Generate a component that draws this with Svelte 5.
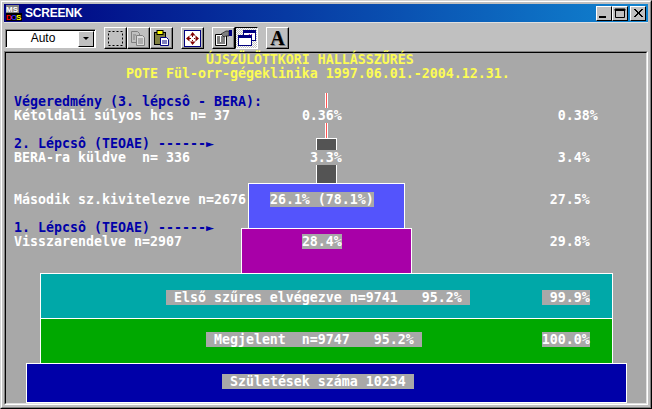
<script>
	// The DOS screen is an 80x25 text grid (8x14 cells), so rows are built by column.
	function row(...parts) {
		let used = 0;
		const segs = [];
		for (const [col, text, cls] of parts) {
			if (col > used) segs.push({ text: ' '.repeat(col - used), cls: '' });
			segs.push({ text, cls });
			used = col + text.length;
		}
		return segs;
	}

	const rows = [
		row([25, 'ÚJSZÜLÖTTKORI HALLÁSSZŰRÉS', 'yellow']),
		row([15, 'POTE Fül-orr-gégeklinika 1997.06.01.-2004.12.31.', 'yellow']),
		[],
		row([1, 'Végeredmény (3. lépcsô - BERA):', 'navy']),
		row([1, 'Kétoldali súlyos hcs  n= 37', ''], [37, '0.36%', 'chip'], [69, '0.38%', '']),
		[],
		row([1, '2. Lépcsô (TEOAE) ------►', 'navy']),
		row([1, 'BERA-ra küldve  n= 336', ''], [38, '3.3%', 'chip'], [69, '3.4%', '']),
		[],
		[],
		row([1, 'Második sz.kivitelezve n=2676', ''], [33, '26.1% (78.1%)', 'chip'], [68, '27.5%', '']),
		[],
		row([1, '1. Lépcsô (TEOAE) ------►', 'navy']),
		row([1, 'Visszarendelve n=2907', ''], [37, '28.4%', 'chip'], [68, '29.8%', '']),
		[],
		[],
		[],
		row([20, ' Első szűres elvégezve n=9741   95.2% ', 'chip'], [67, ' 99.9%', 'chip']),
		[],
		[],
		row([25, ' Megjelent  n=9747   95.2% ', 'chip'], [67, '100.0%', 'chip']),
		[],
		[],
		row([27, ' Születések száma 10234 ', 'chip'])
	];

	const bars = [
		{ id: 'red', width: 3, height: 45 },
		{ id: 'dark', width: 21, height: 45 },
		{ id: 'blue', width: 157, height: 45 },
		{ id: 'purple', width: 171, height: 45 },
		{ id: 'teal', width: 573, height: 45 },
		{ id: 'green', width: 573, height: 45 },
		{ id: 'deep', width: 601, height: 40 }
	];
</script>

<div class="window">
	<div class="frame">
		<header class="titlebar">
			<svg class="dos-logo" width="16" height="16" viewBox="0 0 16 16" aria-hidden="true">
				<rect x="0" y="0" width="13" height="8" fill="#808080" />
				<rect x="0" y="8" width="16" height="8" fill="#000" />
				<text x="0" y="7" class="ms">MS</text>
				<text x="0" y="15" class="d">D</text>
				<text x="5" y="15" class="o">O</text>
				<text x="10" y="15" class="s">S</text>
			</svg>
			<span class="title">SCREENK</span>
			<div class="caption-buttons">
				<button class="cap" aria-label="Minimize">
					<svg width="14" height="13" viewBox="0 0 14 13"><rect x="2" y="9" width="7" height="2" fill="#000" /></svg>
				</button>
				<button class="cap" aria-label="Maximize">
					<svg width="14" height="13" viewBox="0 0 14 13"><path d="M2.5 2.5h9v8h-9z M2 2h10v1.5H2z" fill="none" stroke="#000" /></svg>
				</button>
				<button class="cap close" aria-label="Close">
					<svg width="14" height="13" viewBox="0 0 14 13"><path d="M3 2l8 8M4 2l8 8M11 2l-8 8M12 2l-8 8" stroke="#000" stroke-width="1" /></svg>
				</button>
			</div>
		</header>

		<div class="toolbar">
			<div class="combo">
				<span class="combo-value">Auto</span>
				<span class="combo-arrow"><i></i></span>
			</div>

			<div class="tool-group">
				<button class="tool" aria-label="Mark">
					<svg width="17" height="17" viewBox="0 0 17 17"><rect x="1.5" y="1.5" width="14" height="14" fill="none" stroke="#000" stroke-dasharray="2 2" /></svg>
				</button>
				<button class="tool" aria-label="Copy">
					<svg width="17" height="17" viewBox="0 0 17 17">
						<path d="M1.5 1.5h6l2 2v9h-8z" fill="#c0c0c0" stroke="#808080" />
						<path d="M6.5 5.5h6l2 2v8h-8z" fill="#dcdcdc" stroke="#808080" />
						<path d="M8 9h5M8 11h5M8 13h5M3 5h3M3 7h2M3 9h2" stroke="#808080" />
					</svg>
				</button>
				<button class="tool" aria-label="Paste">
					<svg width="17" height="17" viewBox="0 0 17 17">
						<rect x="1.5" y="2.5" width="11" height="12" fill="#808040" stroke="#000" />
						<rect x="4" y="0.5" width="6" height="4" fill="#ffff00" stroke="#000" />
						<path d="M7.5 7.5h6l2 2v6h-8z" fill="#fff" stroke="#000080" />
						<path d="M9 11h5M9 13h5" stroke="#000080" />
					</svg>
				</button>
			</div>

			<div class="tool-group">
				<button class="tool" aria-label="Full screen">
					<svg width="17" height="17" viewBox="0 0 17 17">
						<rect x="0.5" y="0.5" width="16" height="16" fill="#fff" stroke="#000080" />
						<path d="M8.5 2l3 3.5H6z M8 5h1v2H8z M8.5 15l3-3.5H6z M8 10h1v2H8z M2 8.5l3.5-3v6z M5 8h2v1H5z M15 8.5l-3.5-3v6z M10 8h2v1h-2z" fill="#800000" />
					</svg>
				</button>
			</div>

			<div class="tool-group">
				<button class="tool" aria-label="Properties">
					<svg width="19" height="17" viewBox="0 0 19 17">
						<path d="M1.5 4.5h10l1 1v10h-11z" fill="#fff" stroke="#000" />
						<path d="M3 7h3M7 7h4M3 9h3M7 9h4M3 11h3M7 11h4M3 13h8" stroke="#000" />
						<path d="M7 4l5-3h3v5h-3l-2 1z" fill="#808080" stroke="#000" stroke-width="0.6" />
						<rect x="15" y="0" width="3" height="6" fill="#000080" />
					</svg>
				</button>
				<button class="tool pressed" aria-label="Background">
					<svg width="18" height="16" viewBox="0 0 18 16">
						<rect x="5.5" y="0.5" width="12" height="10" fill="#fff" stroke="#000080" />
						<rect x="5" y="0" width="13" height="3" fill="#000080" />
						<path d="M11 4l1.5 2L14 4" fill="none" stroke="#a000a0" />
						<rect x="0.5" y="5.5" width="13" height="10" fill="#fff" stroke="#000080" />
						<rect x="0" y="5" width="14" height="3" fill="#000080" />
					</svg>
				</button>
			</div>

			<div class="tool-group">
				<button class="tool font-tool" aria-label="Font">A</button>
			</div>
		</div>

		<div class="client">
			<main class="screen">
				<div class="pyramid">
					{#each bars as bar (bar.id)}
						<div class="bar {bar.id}" style="width:{bar.width}px; height:{bar.height}px"></div>
					{/each}
				</div>
				<div class="text">
					{#each rows as segs}
						<div class="line">{#each segs as s}<span class={s.cls}>{s.text}</span>{/each}</div>
					{/each}
				</div>
			</main>
		</div>
	</div>
</div>

<style>
	:global(body) {
		margin: 0;
		background: #c0c0c0;
	}

	button {
		padding: 0;
		margin: 0;
		font: inherit;
	}

	.window {
		box-sizing: border-box;
		width: 652px;
		height: 409px;
		border: 1px solid;
		border-color: #d4d4d4 #000 #000 #d4d4d4;
		overflow: hidden;
	}

	.frame {
		box-sizing: border-box;
		height: 100%;
		padding: 2px;
		background: #c0c0c0;
		border: 1px solid;
		border-color: #fff #808080 #808080 #fff;
	}

	.titlebar {
		display: flex;
		align-items: center;
		height: 18px;
		padding: 0 2px;
		background: linear-gradient(90deg, #000080, #1084d0);
	}

	.dos-logo {
		flex: none;
	}

	.dos-logo text {
		font-family: 'Liberation Sans', sans-serif;
		font-weight: 700;
		font-size: 8px;
	}

	.ms {
		fill: #fff;
	}

	.d {
		fill: #f00;
	}

	.o {
		fill: #3030ff;
	}

	.s {
		fill: #ff0;
	}

	.title {
		margin-left: 3px;
		color: #fff;
		font-family: 'Liberation Sans', sans-serif;
		font-weight: 700;
		font-size: 12px;
		letter-spacing: -0.2px;
	}

	.caption-buttons {
		display: flex;
		margin-left: auto;
	}

	.cap {
		display: flex;
		align-items: center;
		justify-content: center;
		box-sizing: border-box;
		width: 16px;
		height: 15px;
		background: #c0c0c0;
		border: 1px solid;
		border-color: #fff #000 #000 #fff;
	}

	.close {
		margin-left: 2px;
	}

	.toolbar {
		display: flex;
		align-items: center;
		box-sizing: border-box;
		height: 29px;
		padding: 2px 0 0 1px;
		border-top: 1px solid #e0e0e0;
	}

	.combo {
		display: flex;
		box-sizing: border-box;
		width: 91px;
		height: 19px;
		border: 1px solid;
		border-color: #808080 #fff #fff #808080;
		box-shadow: inset 1px 1px 0 #000;
		background: #fff;
	}

	.combo-value {
		flex: 1;
		padding: 1px 0 0 2px;
		text-align: center;
		font-family: 'Liberation Sans', sans-serif;
		font-size: 12px;
		line-height: 15px;
	}

	.combo-arrow {
		display: flex;
		align-items: center;
		justify-content: center;
		box-sizing: border-box;
		width: 16px;
		margin: 1px 1px 0 0;
		background: #c0c0c0;
		border: 1px solid;
		border-color: #fff #000 #000 #fff;
	}

	.combo-arrow i {
		border: 3px solid transparent;
		border-top: 3px solid #000;
		border-bottom: 0;
	}

	.tool-group {
		display: flex;
		margin-left: 8px;
	}

	.tool {
		display: flex;
		align-items: center;
		justify-content: center;
		box-sizing: border-box;
		width: 23px;
		height: 22px;
		background: #c0c0c0;
		border: 1px solid;
		border-color: #fff #000 #000 #fff;
		box-shadow: inset -1px -1px 0 #808080;
	}

	.tool.pressed {
		border-color: #000 #fff #fff #000;
		box-shadow: none;
		background: repeating-conic-gradient(#fff 0 25%, #c0c0c0 0 50%) 0 0 / 2px 2px;
	}

	.font-tool {
		font-family: 'Liberation Serif', serif;
		font-weight: 700;
		font-size: 20px;
		line-height: 1;
		text-shadow: 1px 1px 0 #808080;
	}

	.client {
		border: 1px solid;
		border-color: #808080 #fff #fff #808080;
	}

	.screen {
		position: relative;
		width: 640px;
		height: 350px;
		background: #a8a8a8;
		border: 1px solid;
		border-color: #000 #dfdfdf #dfdfdf #000;
	}

	.pyramid {
		display: flex;
		flex-direction: column;
		align-items: center;
		box-sizing: border-box;
		height: 100%;
		padding: 40px 0 0 1px;
	}

	.bar {
		flex: none;
		box-sizing: border-box;
		border: solid #fff;
		border-width: 1px 1px 0;
	}

	.red {
		border-top: 0;
		background: #ff5454;
	}

	.dark {
		background: #545454;
	}

	.blue {
		background: #5454fc;
	}

	.purple {
		background: #a800a8;
	}

	.teal {
		background: #00a8a8;
	}

	.green {
		background: #00a800;
	}

	.deep {
		background: #0000a8;
		border-bottom-width: 1px;
	}

	.text {
		position: absolute;
		inset: 0;
		color: #fff;
		font-family: 'DejaVu Sans Mono', 'Liberation Mono', monospace;
		font-weight: 700;
		font-size: 13.29px;
		line-height: 14px;
		white-space: pre;
	}

	.line {
		height: 14px;
	}

	.yellow {
		color: #fcfc54;
	}

	.navy {
		color: #0000a8;
	}

	.chip {
		background: #a8a8a8;
	}
</style>
